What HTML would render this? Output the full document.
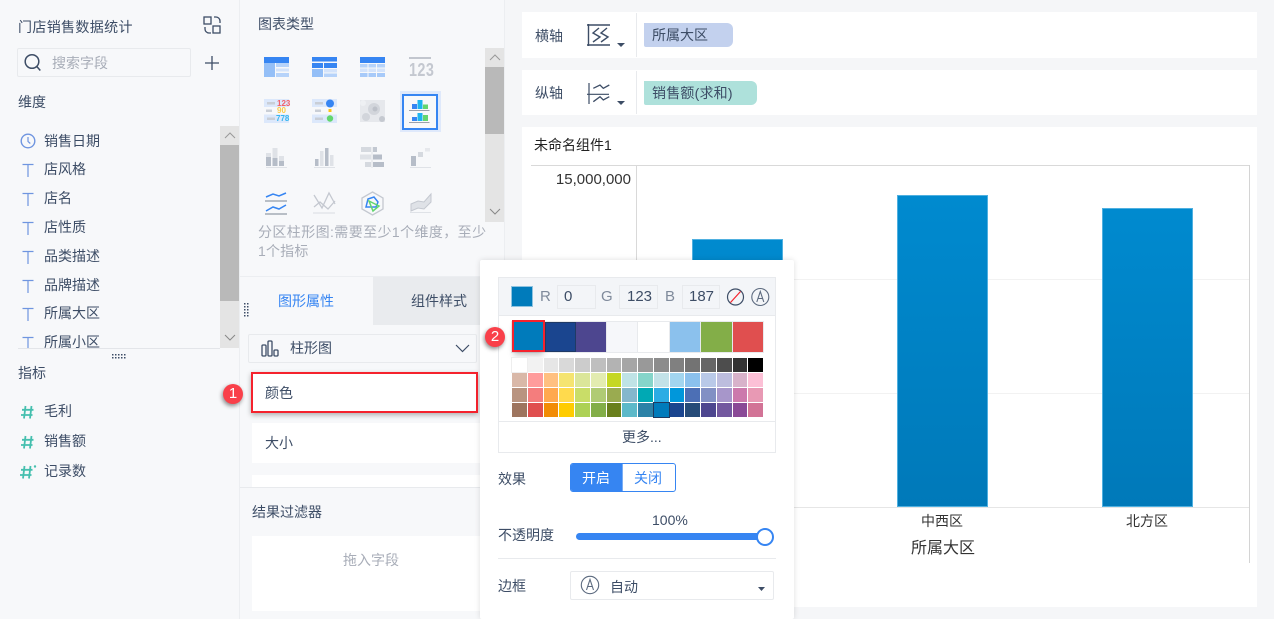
<!DOCTYPE html>
<html lang="zh"><head><meta charset="utf-8"><title>门店销售数据统计</title>
<style>
html,body{margin:0;padding:0;height:619px;overflow:hidden}
body{width:1274px;position:relative;background:#f5f6f8;font-family:"Liberation Sans","Noto Sans CJK SC",sans-serif;font-size:14px;color:#3d4d66}
.a{position:absolute}
.t{position:absolute;line-height:20px;height:20px;white-space:nowrap}
svg{position:absolute;overflow:visible}
.g{color:#a8adb8}
.sw{position:absolute;left:512px;top:322px;display:flex;width:251px;height:30px;gap:1px;background:#e8eaed;outline:1px solid #e8eaed}
.sw i{flex:1;display:block}
.grid{position:absolute;left:512px;top:358px;width:251px;height:59px;display:grid;grid-template-columns:repeat(16,1fr);grid-template-rows:repeat(4,14px);gap:1px}
.grid i{display:block}
.badge{position:absolute;width:20px;height:20px;border-radius:50%;background:#f9404a;color:#fff;text-align:center;line-height:20px;font-size:15px;box-shadow:-1px 2px 4px rgba(0,0,0,.45)}
</style></head><body>

<!-- Left panel -->
<div class="a" style="left:0;top:0;width:239px;height:619px;background:#f7f8fa;border-right:1px solid #eceef1"></div>
<div class="t" style="left:18px;top:17px;letter-spacing:.35px">门店销售数据统计</div>
<svg style="left:202px;top:15px" width="20" height="20" fill="none" stroke="#3d4d66" stroke-width="1.3"><rect x="2" y="2" width="7" height="7"/><rect x="11" y="11" width="7" height="7"/><path d="M12 2h2a4 4 0 0 1 4 4v2M9 18H7a4 4 0 0 1-4-4v-2"/></svg>
<div class="a" style="left:17px;top:48px;width:172px;height:27px;border:1px solid #e8eaed;border-radius:2px"></div>
<svg style="left:24px;top:54px" width="18" height="18" fill="none" stroke="#3d4d66" stroke-width="1.5"><circle cx="8" cy="7.5" r="6.8"/><path d="M12.800 12.500l3.500 4"/></svg>
<div class="t g" style="left:52px;top:53px">搜索字段</div>
<svg style="left:204px;top:55px" width="16" height="16" stroke="#3d4d66" stroke-width="1.3"><path d="M1 8h14M8 1v14"/></svg>
<div class="t" style="left:18px;top:92px">维度</div>

<div class="a" style="left:0;top:126px;width:220px;height:222px;overflow:hidden">
<svg style="left:20px;top:7px" width="16" height="16" fill="none" stroke="#6f95e0" stroke-width="1.4"><circle cx="8" cy="8" r="6.8"/><path d="M8 4v4.5l2.3 2" stroke-width="1.2"/></svg>
<div class="t" style="left:44px;top:5px">销售日期</div>
<svg style="left:21px;top:37px" width="14" height="14" fill="none" stroke="#6f95e0" stroke-width="1.2"><path d="M1.500 1.500h11M7 1.500v12.500"/></svg><div class="t" style="left:44px;top:33px">店风格</div>
<svg style="left:21px;top:66px" width="14" height="14" fill="none" stroke="#6f95e0" stroke-width="1.2"><path d="M1.500 1.500h11M7 1.500v12.500"/></svg><div class="t" style="left:44px;top:62px">店名</div>
<svg style="left:21px;top:95px" width="14" height="14" fill="none" stroke="#6f95e0" stroke-width="1.2"><path d="M1.500 1.500h11M7 1.500v12.500"/></svg><div class="t" style="left:44px;top:91px">店性质</div>
<svg style="left:21px;top:124px" width="14" height="14" fill="none" stroke="#6f95e0" stroke-width="1.2"><path d="M1.500 1.500h11M7 1.500v12.500"/></svg><div class="t" style="left:44px;top:120px">品类描述</div>
<svg style="left:21px;top:153px" width="14" height="14" fill="none" stroke="#6f95e0" stroke-width="1.2"><path d="M1.500 1.500h11M7 1.500v12.500"/></svg><div class="t" style="left:44px;top:149px">品牌描述</div>
<svg style="left:21px;top:181px" width="14" height="14" fill="none" stroke="#6f95e0" stroke-width="1.2"><path d="M1.500 1.500h11M7 1.500v12.500"/></svg><div class="t" style="left:44px;top:177px">所属大区</div>
<svg style="left:21px;top:210px" width="14" height="14" fill="none" stroke="#6f95e0" stroke-width="1.2"><path d="M1.500 1.500h11M7 1.500v12.500"/></svg><div class="t" style="left:44px;top:206px">所属小区</div>
</div>
<div class="a" style="left:220px;top:126px;width:19px;height:222px;background:#e4e4e4"></div>
<div class="a" style="left:220px;top:145px;width:19px;height:156px;background:#b9b9b9"></div>
<svg style="left:224px;top:132px" width="12" height="8" fill="none" stroke="#999" stroke-width="1"><path d="M1 6l5-5 5 5"/></svg>
<svg style="left:224px;top:334px" width="12" height="8" fill="none" stroke="#888" stroke-width="1"><path d="M1 1l5 5 5-5"/></svg>
<div class="a" style="left:18px;top:348px;width:202px;height:1px;background:#e3e5e9"></div>
<svg style="left:112px;top:354px" width="16" height="5" fill="#3d4d66"><rect x="0" y="0" width="1.5" height="1.5"/><rect x="3" y="0" width="1.5" height="1.5"/><rect x="6" y="0" width="1.5" height="1.5"/><rect x="9" y="0" width="1.5" height="1.5"/><rect x="12" y="0" width="1.5" height="1.5"/><rect x="0" y="3" width="1.5" height="1.5"/><rect x="3" y="3" width="1.5" height="1.5"/><rect x="6" y="3" width="1.5" height="1.5"/><rect x="9" y="3" width="1.5" height="1.5"/><rect x="12" y="3" width="1.5" height="1.5"/></svg>
<div class="t" style="left:18px;top:363px">指标</div>
<svg style="left:20px;top:405px" width="15" height="15" fill="none" stroke="#45bfae" stroke-width="1.8"><path d="M5.500 1L4 13.500M11.500 1L10 13.500M2 4.800h11.500M1 10h11.500"/></svg><div class="t" style="left:44px;top:401px">毛利</div>
<svg style="left:20px;top:435px" width="15" height="15" fill="none" stroke="#45bfae" stroke-width="1.8"><path d="M5.500 1L4 13.500M11.500 1L10 13.500M2 4.800h11.500M1 10h11.500"/></svg><div class="t" style="left:44px;top:431px">销售额</div>
<svg style="left:19px;top:465px" width="18" height="15" fill="none" stroke="#45bfae" stroke-width="1.8"><path d="M5.500 1L4 13.500M11.500 1L10 13.500M2 4.800h11.500M1 10h11.500"/><circle cx="16" cy="1.500" r="1.200" fill="#45bfae" stroke="none"/></svg><div class="t" style="left:44px;top:461px">记录数</div>

<!-- Middle panel -->
<div class="a" style="left:240px;top:0;width:264px;height:619px;background:#f7f8fa;border-right:1px solid #eceef1"></div>
<div class="t" style="left:258px;top:14px">图表类型</div>

<svg style="left:264px;top:57px" width="25" height="20"><rect width="25" height="6" fill="#3685f2"/><rect y="6" width="11" height="14" fill="#94bff7"/><rect x="12" y="6" width="13" height="4" fill="#b6d3fa"/><rect x="12" y="11.500" width="13" height="3" fill="#d3e3fb"/><rect x="12" y="16" width="13" height="4" fill="#b6d3fa"/></svg>
<svg style="left:312px;top:57px" width="25" height="20"><rect width="25" height="4.500" fill="#3685f2"/><rect y="6" width="11" height="5" fill="#3685f2"/><rect x="12" y="6" width="13" height="5" fill="#3685f2"/><rect y="12" width="11" height="8" fill="#94bff7"/><rect x="12" y="12" width="13" height="3.500" fill="#d3e3fb"/><rect x="12" y="16.500" width="13" height="3.500" fill="#b6d3fa"/></svg>
<svg style="left:360px;top:57px" width="25" height="20"><rect width="25" height="6" fill="#3685f2"/><g fill="#b6d3fa"><rect y="7" width="7.500" height="3.500"/><rect x="8.500" y="7" width="7.500" height="3.500"/><rect x="17" y="7" width="8" height="3.500"/></g><g fill="#d3e3fb"><rect y="11.500" width="7.500" height="3.500"/><rect x="8.500" y="11.500" width="7.500" height="3.500"/><rect x="17" y="11.500" width="8" height="3.500"/></g><g fill="#a7caf9"><rect y="16" width="7.500" height="4"/><rect x="8.500" y="16" width="7.500" height="4"/><rect x="17" y="16" width="8" height="4"/></g></svg>
<svg style="left:409px;top:57px" width="22" height="20"><rect width="22" height="2" fill="#c2c6ce"/></svg>
<div class="t" style="left:409px;top:60px;font-size:18px;font-weight:bold;color:#c4c8d0;transform:scaleX(.8);transform-origin:left;letter-spacing:.5px">123</div>

<svg style="left:264px;top:99px" width="25" height="24"><rect width="25" height="8" fill="#dce8fb"/><rect y="15.500" width="25" height="8.500" fill="#dce8fb"/><g fill="#c9ced6"><rect x="3" y="3" width="8" height="2.500"/><rect x="2" y="10.500" width="6" height="2.500"/><rect x="3" y="18.500" width="8" height="2.500"/></g></svg>
<div class="t" style="left:277px;top:94px;font-size:8px;font-weight:bold;color:#f2606a">123</div>
<div class="t" style="left:277px;top:101px;font-size:8px;font-weight:bold;color:#fbcb4a">90</div>
<div class="t" style="left:276px;top:109px;font-size:8px;font-weight:bold;color:#35b5f0">778</div>
<svg style="left:312px;top:99px" width="25" height="24"><rect width="25" height="8" fill="#dce8fb"/><rect y="15.500" width="25" height="8.500" fill="#dce8fb"/><g fill="#c9ced6"><rect x="3" y="3" width="8" height="2.500"/><rect x="3" y="10.500" width="6" height="2.500"/><rect x="3" y="18.500" width="8" height="2.500"/></g><circle cx="18" cy="4.500" r="4" fill="#3685f2"/><rect x="16.500" y="10" width="3" height="3" fill="#fcc316"/><circle cx="18" cy="19.500" r="3.200" fill="#63d66f"/></svg>
<svg style="left:360px;top:100px" width="25" height="22"><rect width="25" height="22" fill="#e6e8ec"/><circle cx="14" cy="9" r="6" fill="#d2d5db"/><circle cx="15" cy="9" r="2.500" fill="#bdc1c9"/><circle cx="6" cy="17" r="4" fill="#d2d5db"/><circle cx="22" cy="19" r="3" fill="#c5c9d0"/><circle cx="3" cy="3" r="3" fill="#eef0f3"/></svg>

<div class="a" style="left:400px;top:91px;width:41px;height:41px;background:#dfe9fb"></div>
<div class="a" style="left:402px;top:94px;width:32px;height:32px;background:#f7f8fa;border:2px solid #3685f2"></div>
<svg style="left:409px;top:100px" width="24" height="24"><rect x="3" y="4" width="5" height="5" fill="#3685f2"/><rect x="8.500" y="0" width="5" height="9" fill="#1db5f0"/><rect x="14" y="4.500" width="5" height="4.500" fill="#63d66f"/><rect y="10" width="20.500" height="1" fill="#9aa0ab"/><rect x="3" y="17" width="5" height="4" fill="#3685f2"/><rect x="8.500" y="13" width="5" height="8" fill="#1db5f0"/><rect x="14" y="15" width="5" height="6" fill="#63d66f"/><rect y="22" width="20.500" height="1" fill="#9aa0ab"/></svg>

<svg style="left:266px;top:148px" width="22" height="20"><rect x="0" y="5" width="5" height="13" fill="#dfe2e7"/><rect x="0" y="9" width="5" height="9" fill="#b6bdc8"/><rect x="6.500" y="0" width="5" height="18" fill="#dfe2e7"/><rect x="6.500" y="10" width="5" height="8" fill="#b6bdc8"/><rect x="13" y="8" width="5" height="10" fill="#dfe2e7"/><rect x="13" y="13" width="5" height="5" fill="#b6bdc8"/><rect y="19" width="21" height="1" fill="#dfe2e7"/></svg>
<svg style="left:314px;top:148px" width="22" height="20"><rect x="1" y="11" width="3.500" height="7" fill="#b6bdc8"/><rect x="6" y="3" width="3.500" height="15" fill="#dfe2e7"/><rect x="11" y="0" width="3.500" height="18" fill="#b6bdc8"/><rect x="16" y="7" width="3.500" height="11" fill="#dfe2e7"/><rect y="19" width="21" height="1" fill="#dfe2e7"/></svg>
<svg style="left:360px;top:147px" width="25" height="21"><rect x="1" y="0" width="10" height="5" fill="#d5d9df"/><rect x="0" y="7.500" width="11" height="5" fill="#dfe2e7"/><rect x="5" y="15" width="6" height="5" fill="#d5d9df"/><rect x="11.500" y="0" width="1" height="21" fill="#dfe2e7"/><rect x="13" y="0" width="4" height="5" fill="#c2c8d1"/><rect x="13" y="7.500" width="9" height="5" fill="#b6bdc8"/><rect x="13" y="15" width="11" height="5" fill="#b6bdc8"/></svg>
<svg style="left:410px;top:148px" width="22" height="20"><rect x="1" y="8" width="5" height="10" fill="#b6bdc8"/><rect x="8" y="4" width="5" height="5" fill="#d5d9df"/><rect x="15" y="0" width="5" height="3.500" fill="#e6e8ec"/><rect y="19" width="21" height="1" fill="#dfe2e7"/></svg>

<svg style="left:265px;top:191px" width="23" height="24" fill="none" stroke-width="1.500"><path d="M1 6l7-3 6 2 7-3" stroke="#3685f2"/><path d="M0 10h22M0 23h22" stroke="#a4aab5"/><path d="M1 20l7-4 6 2 7-4" stroke="#3685f2"/></svg>
<svg style="left:313px;top:192px" width="23" height="22" fill="none" stroke="#c4c8d0" stroke-width="1.3"><path d="M1 3l8 13 7-15 6 11M1 15l6-5 8 7 7-8"/><path d="M0 21h22" stroke="#dfe2e7"/></svg>
<svg style="left:361px;top:191px" width="23" height="25" fill="none"><path d="M11.500 1L22 7v11l-10.500 6L1 18V7z" stroke="#c4c8d0" stroke-width="1.300"/><path d="M7 8l6-2 4 5-2 5H5z" stroke="#3685f2" stroke-width="1.500"/><path d="M8 10l10 5-6 5z" stroke="#63d66f" stroke-width="1.500"/></svg>
<svg style="left:410px;top:192px" width="22" height="22"><path d="M1 12l7-3 6 1 7-8v8l-7 7-6-1-7 3z" fill="#dfe2e7" stroke="#c4c8d0"/><rect y="20" width="21" height="1" fill="#dfe2e7"/></svg>

<div class="a" style="left:485px;top:48px;width:19px;height:174px;background:#e4e4e4"></div>
<div class="a" style="left:485px;top:67px;width:19px;height:67px;background:#b9b9b9"></div>
<svg style="left:489px;top:54px" width="12" height="8" fill="none" stroke="#999" stroke-width="1"><path d="M1 6l5-5 5 5"/></svg>
<svg style="left:489px;top:208px" width="12" height="8" fill="none" stroke="#888" stroke-width="1"><path d="M1 1l5 5 5-5"/></svg>
<div class="t g" style="left:258px;top:222px;letter-spacing:.4px">分区柱形图:需要至少1个维度，至少</div>
<div class="t g" style="left:258px;top:241px;letter-spacing:.2px">1个指标</div>

<div class="a" style="left:240px;top:276px;width:265px;height:1px;background:#eceef1"></div>
<div class="a" style="left:373px;top:277px;width:131px;height:48px;background:#e9ebee"></div>
<div class="t" style="left:278px;top:291px;color:#3685f2">图形属性</div>
<div class="t" style="left:411px;top:291px">组件样式</div>
<svg style="left:244px;top:303px" width="6" height="15" fill="#3d4d66"><path d="M0 0h1.500v1.500H0zM3 0h1.500v1.500H3zM0 3h1.500v1.500H0zM3 3h1.500v1.500H3zM0 6h1.500v1.500H0zM3 6h1.500v1.500H3zM0 9h1.500v1.500H0zM3 9h1.500v1.500H3zM0 12h1.500v1.500H0zM3 12h1.500v1.500H3z"/></svg>

<div class="a" style="left:248px;top:334px;width:227px;height:27px;border:1px solid #e8eaed;border-radius:2px"></div>
<svg style="left:261px;top:340px" width="18" height="17" fill="none" stroke="#3d4d66" stroke-width="1.300"><rect x="1" y="5" width="4" height="11" rx="1"/><rect x="7" y="1" width="4" height="15" rx="1"/><rect x="13" y="10" width="4" height="6" rx="1"/></svg>
<div class="t" style="left:290px;top:338px">柱形图</div>
<svg style="left:455px;top:344px" width="15" height="9" fill="none" stroke="#3d4d66" stroke-width="1.200"><path d="M1 1l6.500 6.500L14 1"/></svg>

<div class="a" style="left:251px;top:372px;width:223px;height:37px;background:#fff;border:2px solid #f5222d;box-shadow:0 2px 5px rgba(0,0,0,.3)"></div>
<div class="t" style="left:265px;top:383px">颜色</div>
<div class="a" style="left:252px;top:423px;width:252px;height:40px;background:#fff"></div>
<div class="t" style="left:265px;top:433px">大小</div>
<div class="a" style="left:252px;top:475px;width:252px;height:12px;background:#fff"></div>
<div class="a" style="left:240px;top:487px;width:264px;height:1px;background:#e8eaed"></div>
<div class="t" style="left:252px;top:502px">结果过滤器</div>
<div class="a" style="left:252px;top:536px;width:252px;height:75px;background:#fff"></div>
<div class="t g" style="left:343px;top:550px">拖入字段</div>

<!-- Top-right cards -->
<div class="a" style="left:522px;top:12px;width:735px;height:46px;background:#fff"></div>
<div class="a" style="left:522px;top:70px;width:735px;height:45px;background:#fff"></div>
<div class="a" style="left:522px;top:127px;width:735px;height:480px;background:#fff"></div>
<div class="a" style="left:636px;top:13px;width:1px;height:44px;background:#e8eaed"></div>
<div class="a" style="left:636px;top:71px;width:1px;height:43px;background:#e8eaed"></div>
<div class="t" style="left:535px;top:26px">横轴</div>
<div class="t" style="left:535px;top:83px">纵轴</div>
<svg style="left:587px;top:24px" width="24" height="22" fill="none" stroke="#3d4d66" stroke-width="1.400"><path d="M0 1h23M0 21h23M1.500 0v22"/><path d="M12 4L6 9l7 4-7 5M20 4l-6 5 7 4-7 5"/></svg>
<svg style="left:587px;top:82px" width="24" height="22" fill="none" stroke="#3d4d66" stroke-width="1.300"><path d="M2 1v21M0 12.300h22" stroke-width="1.200"/><path d="M6.300 6.300L13 3l3.300 3.300L22.300 3M6.300 19.700L13 14.700l3.300 3.300 6-3.300"/></svg>
<svg style="left:617px;top:43px" width="10" height="5" fill="#3d4d66"><path d="M0 0h8L4 4z"/></svg>
<svg style="left:617px;top:101px" width="10" height="5" fill="#3d4d66"><path d="M0 0h8L4 4z"/></svg>
<div class="a" style="left:644px;top:23px;width:89px;height:24px;background:#c3d1ee;border-radius:0 6px 6px 2px"></div>
<div class="t" style="left:652px;top:25px">所属大区</div>
<div class="a" style="left:644px;top:81px;width:113px;height:24px;background:#aee1db;border-radius:0 6px 6px 2px"></div>
<div class="t" style="left:652px;top:83px;letter-spacing:.2px">销售额(求和)</div>
<div class="t" style="left:534px;top:135px;color:#222">未命名组件1</div>

<!-- Chart -->
<div class="a" style="left:531px;top:165px;width:719px;height:1px;background:#d9d9d9"></div>
<div class="a" style="left:636px;top:165px;width:1px;height:343px;background:#d9d9d9"></div>
<div class="a" style="left:1249px;top:165px;width:1px;height:398px;background:#d4d4d4"></div>
<div class="a" style="left:636px;top:279px;width:613px;height:1px;background:#f2f2f2"></div>
<div class="a" style="left:636px;top:393px;width:613px;height:1px;background:#f2f2f2"></div>
<div class="a" style="left:636px;top:507px;width:613px;height:1px;background:#e6e6e6"></div>
<div class="t" style="left:531px;width:100px;top:170px;text-align:right;font-size:15px;color:#333">15,000,000</div>
<div class="a" style="left:692px;top:239px;width:91px;height:268px;background:linear-gradient(#008acf,#0079b9);box-sizing:border-box;border:1px solid #4fb0e0"></div>
<div class="a" style="left:897px;top:195px;width:91px;height:312px;background:linear-gradient(#008acf,#0079b9);box-sizing:border-box;border:1px solid #4fb0e0"></div>
<div class="a" style="left:1102px;top:208px;width:91px;height:299px;background:linear-gradient(#008acf,#0079b9);box-sizing:border-box;border:1px solid #4fb0e0"></div>
<div class="t" style="left:921px;top:511px;color:#333">中西区</div>
<div class="t" style="left:1126px;top:511px;color:#333">北方区</div>
<div class="t" style="left:911px;top:539px;font-size:16px;color:#333">所属大区</div>

<!-- Popup -->
<div class="a" style="left:480px;top:260px;width:314px;height:359px;background:#fff;border-radius:2px;box-shadow:0 0 6px rgba(0,0,0,.13)"></div>
<div class="a" style="left:498px;top:277px;width:276px;height:174px;border:1px solid #e8eaed"></div>
<div class="a" style="left:499px;top:278px;width:276px;height:37px;background:#f3f5f8;border-bottom:1px solid #e8eaed"></div>
<div class="a" style="left:512px;top:287px;width:20px;height:19px;background:#007bbb;outline:1px solid #8fc3e0"></div>
<div class="t" style="left:540px;top:287px;color:#7f8a9b;font-size:15px">R</div>
<div class="a" style="left:557px;top:285px;width:37px;height:22px;border:1px solid #e8eaed"></div>
<div class="t" style="left:564px;top:287px;font-size:15px">0</div>
<div class="t" style="left:601px;top:287px;color:#7f8a9b;font-size:15px">G</div>
<div class="a" style="left:619px;top:285px;width:37px;height:22px;border:1px solid #e8eaed"></div>
<div class="t" style="left:627px;top:287px;font-size:15px">123</div>
<div class="t" style="left:665px;top:287px;color:#7f8a9b;font-size:15px">B</div>
<div class="a" style="left:682px;top:285px;width:36px;height:22px;border:1px solid #e8eaed"></div>
<div class="t" style="left:689px;top:287px;font-size:15px">187</div>
<svg style="left:727px;top:288px" width="18" height="18" fill="none"><circle cx="8.500" cy="9" r="8" stroke="#3d4d66" stroke-width="1.200"/><path d="M3.500 14.500l10-11" stroke="#f5222d" stroke-width="1.200"/></svg>
<svg style="left:751px;top:288px" width="19" height="18" fill="none" stroke="#5c6a7f" stroke-width="1.100"><circle cx="9.300" cy="9" r="8.500"/><path d="M5.800 14L9.300 3.500 12.800 14M7 10.500h4.600"/></svg>

<div class="sw"><i style="background:#007bbb"></i><i style="background:#1a458f"></i><i style="background:#4d468f"></i><i style="background:#f6f7fa"></i><i style="background:#fff"></i><i style="background:#8bc1ed"></i><i style="background:#83ae48"></i><i style="background:#e04f4f"></i></div>
<div class="a" style="left:514px;top:322px;width:29px;height:28px;background:#007bbb;box-shadow:0 5px 6px rgba(0,0,0,.25)"></div>
<div class="a" style="left:545px;top:322px;width:31px;height:30px;box-sizing:border-box;border:1px solid #1f3a66;background:#1a458f"></div>
<div class="a" style="left:512px;top:320px;width:29px;height:28px;border:2px solid #f5222d"></div>

<div class="grid">
<i style="background:#fff;outline:1px solid #eee"></i><i style="background:#f2f2f2"></i><i style="background:#e6e6e6"></i><i style="background:#d9d9d9"></i><i style="background:#ccc"></i><i style="background:#bfbfbf"></i><i style="background:#b3b3b3"></i><i style="background:#a6a6a6"></i><i style="background:#999"></i><i style="background:#8c8c8c"></i><i style="background:#808080"></i><i style="background:#737373"></i><i style="background:#666"></i><i style="background:#4d4d4d"></i><i style="background:#333"></i><i style="background:#000"></i>
<i style="background:#d9b8a8"></i><i style="background:#ff9c9c"></i><i style="background:#ffc080"></i><i style="background:#f5e470"></i><i style="background:#dbe69a"></i><i style="background:#e3ecb0"></i><i style="background:#c5d724"></i><i style="background:#bfe3e6"></i><i style="background:#85d5ca"></i><i style="background:#c2e2e8"></i><i style="background:#a2d5ef"></i><i style="background:#8bc1ed"></i><i style="background:#b9c9e8"></i><i style="background:#bdbdde"></i><i style="background:#d8b2ca"></i><i style="background:#fcc0d6"></i>
<i style="background:#b99480"></i><i style="background:#f47d7d"></i><i style="background:#ffa94f"></i><i style="background:#ffda4d"></i><i style="background:#c9dd68"></i><i style="background:#b0cb74"></i><i style="background:#9aab50"></i><i style="background:#84b7cc"></i><i style="background:#00a9b4"></i><i style="background:#2cace4"></i><i style="background:#0097db"></i><i style="background:#4c6fb5"></i><i style="background:#8290c4"></i><i style="background:#a796ca"></i><i style="background:#cc79ac"></i><i style="background:#e899b4"></i>
<i style="background:#9e755f"></i><i style="background:#e04f4f"></i><i style="background:#f28c05"></i><i style="background:#fc0"></i><i style="background:#add155"></i><i style="background:#83ae48"></i><i style="background:#697f1c"></i><i style="background:#5cb9c9"></i><i style="background:#2c82a7"></i><i style="background:#007bbb"></i><i style="background:#1a458f"></i><i style="background:#264b78"></i><i style="background:#4d468f"></i><i style="background:#73589f"></i><i style="background:#8a4996"></i><i style="background:#d27396"></i>
</div>
<div class="a" style="left:653px;top:402px;width:15px;height:14px;background:#007bbb;border:1px solid #1f3a5f"></div>
<div class="a" style="left:499px;top:421px;width:276px;height:1px;background:#e8eaed"></div>
<div class="t" style="left:622px;top:427px">更多...</div>

<div class="t" style="left:498px;top:469px">效果</div>
<div class="a" style="left:570px;top:463px;width:104px;height:27px;border:1px solid #3685f2;border-radius:3px;overflow:hidden;background:#fff"><div style="width:51px;height:27px;background:#3685f2;border-right:1px solid #7aaef5"></div></div>
<div class="t" style="left:582px;top:468px;color:#fff">开启</div>
<div class="t" style="left:634px;top:468px;color:#3685f2">关闭</div>
<div class="t" style="left:652px;top:510px">100%</div>
<div class="t" style="left:498px;top:525px">不透明度</div>
<div class="a" style="left:576px;top:533px;width:190px;height:7px;background:#3685f2;border-radius:4px"></div>
<div class="a" style="left:756px;top:528px;width:14px;height:14px;background:#fff;border:2px solid #3685f2;border-radius:50%"></div>
<div class="a" style="left:498px;top:558px;width:278px;height:1px;background:#e8eaed"></div>
<div class="t" style="left:498px;top:576px">边框</div>
<div class="a" style="left:570px;top:571px;width:202px;height:27px;border:1px solid #e8eaed;border-radius:2px"></div>
<svg style="left:581px;top:576px" width="19" height="18" fill="none" stroke="#5c6a7f" stroke-width="1.100"><circle cx="9" cy="9" r="8.700"/><path d="M5.500 14L9 3.500 12.500 14M6.700 10.500h4.600"/></svg>
<div class="t" style="left:610px;top:577px">自动</div>
<svg style="left:757px;top:587px" width="10" height="5" fill="#3d4d66"><path d="M1 0h7L4.500 4z"/></svg>

<div class="badge" style="left:223px;top:384px">1</div>
<div class="badge" style="left:485px;top:327px">2</div>
</body></html>
